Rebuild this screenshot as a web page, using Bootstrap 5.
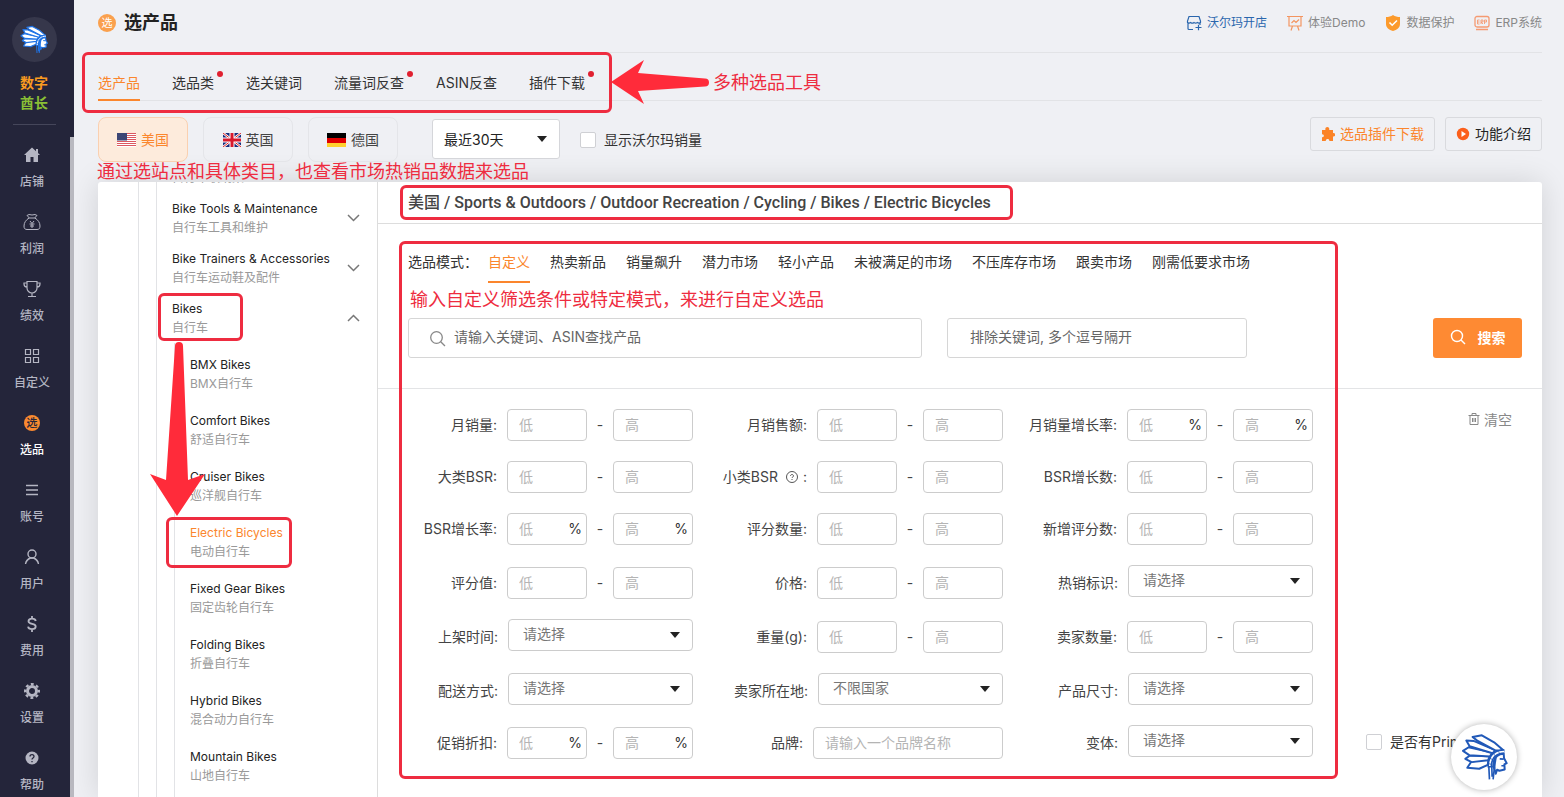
<!DOCTYPE html>
<html lang="zh-CN">
<head>
<meta charset="utf-8">
<meta name="viewport" content="width=device-width, initial-scale=1">
<title>选产品 - 数字酋长</title>
<link rel="stylesheet" href="https://cdn.jsdelivr.net/npm/bootstrap@5.3.0/dist/css/bootstrap.min.css">
<style>
:root{--brand:#fb862d;--note:#ee2c40;--line:#e2e3e6}
body{font:14px/20px Inter,"Noto Sans CJK SC",sans-serif;background:#eff0f4;color:#333;height:100vh;overflow:hidden}
a{text-decoration:none;color:inherit}
.fs-s{font-size:12px}
.text-brand{color:var(--brand)!important}

/* sidebar */
.side{width:74px;background:#24253a;color:#b5b6c3;overflow:hidden}
.side-top{height:137px;padding:17px 6px 0 0}
.side-logo{width:45px;height:45px;background:#36374b;margin-bottom:11px}
.side-name{font-weight:700;line-height:20px}
.side-rule{width:43px;height:1px;background:#45465a;margin-top:11px}
.side-nav{border-right:4px solid #b9b9c0;padding-right:6px}
.side-nav a{height:67px;padding-top:9px;font-weight:500;font-size:12px}
.side-nav svg{width:18px;height:18px;margin-bottom:8px}
.side-nav a.active{color:#fff}

/* page head */
.main{padding:0 22px 0 24px}
.page-head,.tool-tabs,.toolbar{flex:none}
.page-head{height:53px;border-bottom:1px solid var(--line);padding-bottom:6px}
.page-head h1{font-size:18px;line-height:24px;font-weight:700;color:#222}
.quick{gap:20px;color:#888}
.quick a{gap:5px}
.tool-tabs{height:48px;border-bottom:1px solid var(--line)}
.tool-list{gap:32px}
.tool-list a{height:48px;line-height:20px;padding-top:20px;display:block;position:relative}
.tool-list a.active,.mode-list a.active{color:var(--brand);border-bottom:2px solid var(--brand)}
.dot::after{content:"";position:absolute;right:-9px;top:18px;width:6px;height:6px;border-radius:50%;background:#e02030}
.toolbar{height:81px;padding-top:16px}
.country{width:90px;height:45px;border:1px solid #e4e5e9;border-radius:8px;gap:5px;background:none;color:#444}
.country.active{background:#fdebdc;border-color:#fad0b0;color:var(--brand)}
.period{width:128px;height:40px;margin:2px 20px 0 34px;padding:0 11px;border-color:#d5d6da;color:#222;font-size:14px;border-radius:3px}
.tick{width:16px;height:16px;margin:0;border-color:#cfd0d4;border-radius:2px!important}
.tool-btn{height:34px;border:1px solid #d9dade;border-radius:3px;padding:0 10px;background:none;color:#222;gap:5px}
.caret{appearance:none;background:#fff url("data:image/svg+xml,%3Csvg xmlns='http://www.w3.org/2000/svg' viewBox='0 0 10 6'%3E%3Cpath fill='%23222' d='M0 0h10L5 6z'/%3E%3C/svg%3E") no-repeat right 12px center/10px 6px}

/* category tree */
.board{flex:1 1 0;min-height:0;background:#fff;border-radius:3px 3px 0 0;box-shadow:0 0 30px rgba(0,0,0,.13)}
.tree{width:280px;flex:none;border-right:1px solid #ddd;overflow:hidden;font-size:12px}
.tree ul{list-style:none;margin:0;padding:0;border-left:1px solid var(--line)}
.tree .lv1{margin-left:40px}
.tree .lv2{margin:-20px 0 0 17px;padding-left:15px}
.tree .lv3{margin-left:2px;padding:3px 0 20px 15px}
.tree a{display:block;padding:6px 0;line-height:19px;color:#222}
.tree .lv3 a{padding:9px 0}
.tree .zh{display:block;color:#999}
.tree .chev{position:absolute;right:17px;top:20px}

/* right panel */
.crumbs{height:42px;border-bottom:1px solid #ddd;padding:0 0 0 30px;font-family:Roboto,"Noto Sans CJK SC",sans-serif;font-size:16px;font-weight:500;color:#444;white-space:nowrap}
.modes{height:59px;padding:28px 0 0 30px}
.mode-list{gap:20px;margin-left:10px}
.mode-list a{display:block;height:31px}
.search-row{padding:35px 20px 30px 30px;gap:25px;border-bottom:1px solid #e3e4e6}
.search-row .form-control,.search-row .btn{height:40px;border-radius:3px;font-size:14px}
.search-row .form-control{border-color:#d6d6d6;padding:0 12px 4px 45px}
.search-row .form-control::placeholder{color:#666}
.search-main{flex:0 1 514px}
.search-row .search-not{flex:0 1 300px;padding-left:22px}
.search-main svg{position:absolute;left:21px;top:12px}
.btn-search{width:89px;background:#fe8a33;color:#fff;font-weight:700;gap:12px;padding:0 0 2px}
.btn-search:hover{background:#f47d23;color:#fff}
.filters{padding:20px 0 38px 30px;display:grid;row-gap:20px}
.filter-row{display:grid;grid-template-columns:310fr 310fr 310fr 204fr}
.mixed{min-height:34px}
.field{display:flex;align-items:center;justify-content:flex-end;gap:10px;padding-right:25px;align-self:end;height:32px;color:#444;white-space:nowrap}
.field-pick{align-self:start}
.field-pick>label{padding-top:4px}
.range{display:flex;width:186px;justify-content:space-between;align-items:center}
.num{width:80px;position:relative}
.field .form-control,.field .form-select{height:32px;font-size:14px;border-color:#ccc;border-radius:4px;padding:0 11px 2px}
.field .form-control::placeholder{color:#b4b4b4}
.field .form-select{width:185px;padding:0 14px 4px;color:#777}
.field .brand-name{width:190px}
.num .unit{position:absolute;right:5px;top:6px;color:#333}
.help-mark{margin:0 5px 0 8px}

/* callouts laid over the page */
.note-box{position:absolute;border:3px solid var(--note);border-radius:6px;pointer-events:none;z-index:2}
.note-text{position:absolute;color:var(--note);font-size:18px;line-height:24px;white-space:nowrap;z-index:2}
.note-arrow{position:absolute;fill:#ff2b3a;z-index:3;pointer-events:none}
.note-tabs{inset:-1px -27px -12px -16px}
.arrow-left{left:513px;top:7px}
.text-tools{left:615px;top:18px}
.text-site{left:-1px;top:59px}
.note-crumb{inset:-8px -22px -7px -8px}
.note-form{top:17px;left:21px;right:204px;bottom:18px}
.text-mode{left:32px;top:64px}
.note-bikes{left:-14px;top:0;width:85px;height:48px}
.arrow-down{left:-23px;top:49px}
.note-ebike{left:-24px;top:3px;width:126px;height:51px}
.helper{position:fixed;right:47px;bottom:7px;width:66px;height:66px;background:#fff;border:0;box-shadow:0 0 6px rgba(0,0,0,.3);z-index:5}
</style>
</head>
<body class="d-flex">

<svg width="0" height="0" class="position-absolute" aria-hidden="true">
  <symbol id="chief" viewBox="360 130 140 145">
    <g fill="#fff" stroke="var(--ink)" stroke-width="6" stroke-linejoin="round">
      <path d="M378 235l12-18 52-11-2 20-26 12z"/>
      <path d="M372 208l14-10 60 2-5 12-50 6z"/>
      <path d="M365 184l17-11 72 16-8 12-62-4z"/>
      <path d="M375 153l22 1 67 28-10 9-69-21z"/>
      <path d="M394 142l28-5 37 21 28 24-23 1-56-30z"/>
      <path d="M460 238l-2-22c3-12 14-22 30-23l1 13 8 15-7 4 1 15-16 4-7-3-4 12z"/>
    </g>
    <g fill="none">
      <path stroke="var(--ink)" stroke-width="14" d="M490 186c-30 0-44 20-44 48"/>
      <path stroke="#fff" stroke-width="5" stroke-dasharray="14 2" d="M489 186c-29 0-43 20-43 44"/>
      <path stroke="var(--ink)" stroke-width="5" d="M443 230l2 40M452 230l1 32M460 234l-4 36M476 208l12 1M481 229h9"/>
    </g>
    <path fill="var(--ink)" d="M453 232c0-14 5-22 14-28l-3 20-3 20z"/>
  </symbol>
</svg>

<aside class="side flex-shrink-0 d-flex flex-column">
  <div class="side-top flex-shrink-0 d-flex flex-column align-items-center">
    <a href="#" class="side-logo rounded-circle d-flex align-items-center justify-content-center" aria-label="数字酋长">
      <svg width="28" height="29" style="--ink:#1f74e8"><use href="#chief"/></svg>
    </a>
    <div class="side-name" style="color:#fa9b20">数字</div>
    <div class="side-name" style="color:#8abf35">酋长</div>
    <div class="side-rule"></div>
  </div>
  <nav class="side-nav flex-fill d-flex flex-column text-center">
    <a href="#"><svg class="d-block mx-auto" viewBox="0 0 18 18" fill="currentColor"><path d="M9 1.500 1 9h2v7h4.500v-5h3v5H15V9h2l-2-2V3h-2v2.200z"/></svg>店铺</a>
    <a href="#"><svg class="d-block mx-auto" viewBox="0 0 18 18" fill="none" stroke="currentColor"><path d="M6 4.500 4 2.500l2-1 3 .500 3-.500 2 1-2 2M5 5h8M6 5C3 7 1 9.500 1 13c0 2.500 1 3.500 3 3.500h10c2 0 3-1 3-3.500 0-3.500-2-6-5-8M7 8l2 2.500L11 8M6.500 11h5M7 13h4M9 11v4"/></svg>利润</a>
    <a href="#"><svg class="d-block mx-auto" viewBox="0 0 18 18" fill="none" stroke="currentColor" stroke-width="1.200"><path d="M4 1.500h10V8a5 5 0 0 1-10 0zM4 3H1v1c0 2 1 3 3 3M14 3h3v1c0 2-1 3-3 3M9 13v3.500M5 16.500h8"/></svg>绩效</a>
    <a href="#"><svg class="d-block mx-auto" viewBox="0 0 18 18" fill="none" stroke="currentColor" stroke-width="1.200"><path d="M2.500 2.500h5v5h-5zM10.500 2.500h5v5h-5zM2.500 10.500h5v5h-5zM10.500 10.500h5v5h-5z"/></svg>自定义</a>
    <a href="#" class="active"><svg class="d-block mx-auto" viewBox="0 0 18 18"><circle cx="9" cy="9" r="8" fill="#fb8a30"/><text x="9" y="13" font-size="11" font-weight="500" text-anchor="middle" fill="#24253a">选</text></svg>选品</a>
    <a href="#"><svg class="d-block mx-auto" viewBox="0 0 18 18" stroke="currentColor" stroke-width="1.500"><path d="M3 4.500h12M3 9h12M3 13.500h12"/></svg>账号</a>
    <a href="#"><svg class="d-block mx-auto" viewBox="0 0 18 18" fill="none" stroke="currentColor" stroke-width="1.400"><circle cx="9" cy="6" r="4"/><path d="M2.500 16c.500-3 2.500-5 5-6h3c2.500 1 4.500 3 5 6"/></svg>用户</a>
    <a href="#"><svg class="d-block mx-auto" viewBox="0 0 18 18" fill="none" stroke="currentColor" stroke-width="1.800"><path d="M12.800 6C12.500 4.500 11 3.700 9 3.700S5.500 4.700 5.500 6.300c0 3.500 7.200 1.800 7.200 5.200 0 1.800-1.700 2.700-3.700 2.700s-3.700-.900-3.900-2.500M9 1v3M9 14v3"/></svg>费用</a>
    <a href="#"><svg class="d-block mx-auto" viewBox="0 0 18 18"><circle cx="9" cy="9" r="4.500" fill="none" stroke="currentColor" stroke-width="3"/><circle cx="9" cy="9" r="6.900" fill="none" stroke="currentColor" stroke-width="2.200" stroke-dasharray="2.900 2.520" stroke-dashoffset="1.400"/></svg>设置</a>
    <a href="#"><svg class="d-block mx-auto" viewBox="0 0 18 18"><circle cx="9" cy="9" r="6.500" fill="currentColor"/><path d="M7 7.500c0-2.500 4-2.500 4 0 0 1.500-2 1.500-2 3M9 12v1.300" fill="none" stroke="#24253a" stroke-width="1.300"/></svg>帮助</a>
  </nav>
</aside>

<main class="main flex-fill d-flex flex-column">
  <header class="page-head d-flex align-items-center justify-content-between">
    <div class="d-flex align-items-center gap-2">
      <svg width="18" height="18" viewBox="0 0 18 18"><circle cx="9" cy="9" r="9" fill="#faa04d"/><text x="9" y="13" font-size="11" text-anchor="middle" fill="#fff">选</text></svg>
      <h1 class="m-0">选产品</h1>
    </div>
    <nav class="quick d-flex fs-s">
      <a href="#" class="d-flex align-items-center" style="color:#2a66ad"><svg width="16" height="16" viewBox="0 0 16 16" fill="none" stroke="currentColor" stroke-width="1.200"><path d="M3 1.500h10l1.500 4.500v1.500c-1 .8-2.200.8-3.200 0-1 .8-2.300.8-3.300 0-1 .8-2.400.8-3.300 0-1 .8-2.200.8-3.200 0V6zM2 8v5.500c0 .6.400 1 1 1h4M14 8v2M9.500 12.500h6M12.500 9.800v5.500"/></svg>沃尔玛开店</a>
      <a href="#" class="d-flex align-items-center"><svg width="16" height="16" viewBox="0 0 16 16" fill="none" stroke="#f39560" stroke-width="1.200"><path d="M0 1.500h16M2 1.500v9.500h12V1.500M4.500 8 7 5.500l2 2 3-3M5.500 11 4 15.500M10.500 11l1.500 4.500"/></svg>体验Demo</a>
      <a href="#" class="d-flex align-items-center"><svg width="16" height="16" viewBox="0 0 16 16"><path fill="#fc9a2b" d="M8 0c2 1.500 4.500 2 7 2v7c0 3.500-3 6-7 7-4-1-7-3.500-7-7V2c2.500 0 5-.500 7-2z"/><path d="m4.500 7.500 2.700 2.700L12 5.500" fill="none" stroke="#fff" stroke-width="1.600"/></svg>数据保护</a>
      <a href="#" class="d-flex align-items-center"><svg width="16" height="16" viewBox="0 0 16 16" fill="none" stroke="#f59a72" stroke-width="1.300"><rect x="1" y="1.500" width="14" height="10.500" rx="2"/><path d="M2 14.500h12" stroke-width="1.500"/><path stroke-width=".9" d="M5.500 5H3.500v4h2M3.500 7h2M7 9V5h2v2H7l2 2M10.500 9V5h2v2h-2"/></svg>ERP系统</a>
    </nav>
  </header>

  <div class="tool-tabs">
    <div class="position-relative d-inline-flex align-top">
      <nav class="tool-list d-flex">
        <a href="#" class="active">选产品</a>
        <a href="#" class="dot">选品类</a>
        <a href="#">选关键词</a>
        <a href="#" class="dot">流量词反查</a>
        <a href="#">ASIN反查</a>
        <a href="#" class="dot">插件下载</a>
      </nav>
      <span class="note-box note-tabs"></span>
      <svg class="note-arrow arrow-left" width="98" height="45" viewBox="0 0 98 45"><path d="M0 22 33 0l-6 13 67 5.500a4 4 0 0 1 0 8L27 31l6 13z"/></svg>
      <span class="note-text text-tools">多种选品工具</span>
    </div>
  </div>

  <div class="toolbar d-flex align-items-start position-relative">
    <div class="d-flex" style="gap:15px">
      <button type="button" class="country active d-flex align-items-center justify-content-center"><svg width="19" height="14" viewBox="0 0 19 14"><path fill="#fff" d="M0 0h19v14H0z"/><path stroke="#dc5860" d="M0 .5h19M0 2.500h19M0 4.500h19M0 6.500h19M0 8.500h19M0 10.500h19M0 12.500h19"/><path fill="#3c4675" d="M0 0h10v7.500H0z"/></svg>美国</button>
      <button type="button" class="country d-flex align-items-center justify-content-center"><svg width="18" height="14" viewBox="0 0 18 14"><path fill="#172b7c" d="M0 0h18v14H0z"/><path stroke="#fff" stroke-width="2.500" d="m0 0 18 14M18 0 0 14"/><path stroke="#d22" d="m0 0 18 14M18 0 0 14"/><path stroke="#fff" stroke-width="5" d="M9 0v14M0 7h18"/><path stroke="#d8182c" stroke-width="3" d="M9 0v14M0 7h18"/></svg>英国</button>
      <button type="button" class="country d-flex align-items-center justify-content-center"><svg width="19" height="14" viewBox="0 0 19 14"><path d="M0 0h19v5H0z"/><path fill="#e00000" d="M0 5h19v5H0z"/><path fill="#ffd12e" d="M0 10h19v4H0z"/></svg>德国</button>
    </div>
    <select class="form-select caret period" aria-label="时间范围"><option>最近30天</option></select>
    <div class="d-flex align-items-center gap-2" style="height:45px">
      <input class="form-check-input tick" type="checkbox" id="walmart"><label for="walmart">显示沃尔玛销量</label>
    </div>
    <div class="ms-auto d-flex" style="gap:10px">
      <button type="button" class="tool-btn text-brand d-flex align-items-center"><svg width="14" height="14" viewBox="0 0 14 14" fill="#fb8327"><path d="M4.500 3C3.800 1.300 5 0 6.300 0s2.500 1.300 1.800 3H12v3c3-.5 3 4 0 3.500V14H8.300c.5-2.800-3.800-2.800-3.500 0H1v-3.800c2.500.5 2.500-3.200 0-3V3z"/></svg>选品插件下载</button>
      <button type="button" class="tool-btn d-flex align-items-center"><svg width="14" height="14" viewBox="0 0 14 14"><circle cx="7" cy="7" r="6.200" fill="#fb5f1b"/><path fill="#fff" d="m5.500 4 4.500 3-4.500 3z"/></svg>功能介绍</button>
    </div>
    <span class="note-text text-site">通过选站点和具体类目，也查看市场热销品数据来选品</span>
  </div>

  <div class="board d-flex">
    <nav class="tree" aria-label="类目">
      <ul class="lv1"><li>
        <ul class="lv2">
          <li><a href="#"><span class="zh">自行车收纳架</span></a></li>
          <li class="position-relative"><a href="#">Bike Tools &amp; Maintenance<span class="zh">自行车工具和维护</span></a><svg class="chev" width="13" height="10" fill="none" stroke="#777" stroke-width="1.500"><path d="m1 2 5.500 5.500L12 2"/></svg></li>
          <li class="position-relative"><a href="#">Bike Trainers &amp; Accessories<span class="zh">自行车运动鞋及配件</span></a><svg class="chev" width="13" height="10" fill="none" stroke="#777" stroke-width="1.500"><path d="m1 2 5.500 5.500L12 2"/></svg></li>
          <li class="position-relative"><a href="#">Bikes<span class="zh">自行车</span></a><svg class="chev" width="13" height="10" fill="none" stroke="#777" stroke-width="1.500"><path d="M1 8 6.500 2.500 12 8"/></svg>
            <span class="note-box note-bikes"></span>
            <svg class="note-arrow arrow-down" width="56" height="175" viewBox="0 0 56 175"><path d="M28 174 1 132l16 6 9-134a4 4 0 0 1 8 0l5 134 17-6z"/></svg>
            <ul class="lv3">
              <li><a href="#">BMX Bikes<span class="zh">BMX自行车</span></a></li>
              <li><a href="#">Comfort Bikes<span class="zh">舒适自行车</span></a></li>
              <li><a href="#">Cruiser Bikes<span class="zh">巡洋舰自行车</span></a></li>
              <li class="position-relative"><a href="#" class="text-brand">Electric Bicycles<span class="zh">电动自行车</span></a><span class="note-box note-ebike"></span></li>
              <li><a href="#">Fixed Gear Bikes<span class="zh">固定齿轮自行车</span></a></li>
              <li><a href="#">Folding Bikes<span class="zh">折叠自行车</span></a></li>
              <li><a href="#">Hybrid Bikes<span class="zh">混合动力自行车</span></a></li>
              <li><a href="#">Mountain Bikes<span class="zh">山地自行车</span></a></li>
            </ul>
          </li>
        </ul>
      </li></ul>
    </nav>

    <section class="flex-fill" style="min-width:0">
      <div class="crumbs d-flex align-items-center"><div class="position-relative">美国 / Sports &amp; Outdoors / Outdoor Recreation / Cycling / Bikes / Electric Bicycles<span class="note-box note-crumb"></span></div></div>

      <form class="position-relative">
        <span class="note-box note-form"></span>
        <div class="modes d-flex"><span>选品模式：</span>
          <nav class="mode-list d-flex">
            <a href="#" class="active">自定义</a><a href="#">热卖新品</a><a href="#">销量飙升</a><a href="#">潜力市场</a><a href="#">轻小产品</a><a href="#">未被满足的市场</a><a href="#">不压库存市场</a><a href="#">跟卖市场</a><a href="#">刚需低要求市场</a>
          </nav>
        </div>
        <span class="note-text text-mode">输入自定义筛选条件或特定模式，来进行自定义选品</span>
        <div class="search-row d-flex">
          <div class="search-main position-relative">
            <svg width="17" height="17" fill="none" stroke="#888" stroke-width="1.300"><circle cx="7.500" cy="7.500" r="5.800"/><path d="m11.700 11.700 4.300 4.300"/></svg>
            <input class="form-control" placeholder="请输入关键词、ASIN查找产品" aria-label="关键词">
          </div>
          <input class="form-control search-not" placeholder="排除关键词, 多个逗号隔开" aria-label="排除关键词">
          <button type="button" class="btn btn-search ms-auto d-flex align-items-center justify-content-center"><svg width="16" height="16" fill="none" stroke="#fff" stroke-width="1.400"><circle cx="7" cy="7" r="5.500"/><path d="m11 11 4 4"/></svg>搜索</button>
        </div>

        <div class="filters">
          <div class="filter-row">
            <div class="field"><label for="a1">月销量:</label><div class="range"><div class="num"><input id="a1" class="form-control" placeholder="低"></div>-<div class="num"><input class="form-control" placeholder="高" aria-label="月销量上限"></div></div></div>
            <div class="field"><label for="a2">月销售额:</label><div class="range"><div class="num"><input id="a2" class="form-control" placeholder="低"></div>-<div class="num"><input class="form-control" placeholder="高" aria-label="月销售额上限"></div></div></div>
            <div class="field"><label for="a3">月销量增长率:</label><div class="range"><div class="num"><input id="a3" class="form-control" placeholder="低"><span class="unit">%</span></div>-<div class="num"><input class="form-control" placeholder="高" aria-label="月销量增长率上限"><span class="unit">%</span></div></div></div>
            <div class="text-end" style="padding-right:30px"><button type="button" class="btn p-0 border-0" style="font-size:14px;line-height:20px;color:#888"><svg width="12" height="12" viewBox="0 0 12 12" fill="none" stroke="currentColor" class="me-1 align-baseline"><path d="M.5 2.500h11M4 2.500v-2h4v2M2 3v8.500h8V3M4.500 5v4M6 5v4M7.500 5v4"/></svg>清空</button></div>
          </div>
          <div class="filter-row">
            <div class="field"><label for="b1">大类BSR:</label><div class="range"><div class="num"><input id="b1" class="form-control" placeholder="低"></div>-<div class="num"><input class="form-control" placeholder="高" aria-label="大类BSR上限"></div></div></div>
            <div class="field"><label for="b2" class="d-flex align-items-center">小类BSR<svg class="help-mark" width="12" height="12" viewBox="0 0 12 12" fill="none" stroke="#555"><circle cx="6" cy="6" r="5.500"/><path d="M4.500 5c0-2 3-2 3 0 0 1-1.500 1-1.500 2M6 8v1"/></svg>:</label><div class="range"><div class="num"><input id="b2" class="form-control" placeholder="低"></div>-<div class="num"><input class="form-control" placeholder="高" aria-label="小类BSR上限"></div></div></div>
            <div class="field"><label for="b3">BSR增长数:</label><div class="range"><div class="num"><input id="b3" class="form-control" placeholder="低"></div>-<div class="num"><input class="form-control" placeholder="高" aria-label="BSR增长数上限"></div></div></div>
          </div>
          <div class="filter-row">
            <div class="field"><label for="c1">BSR增长率:</label><div class="range"><div class="num"><input id="c1" class="form-control" placeholder="低"><span class="unit">%</span></div>-<div class="num"><input class="form-control" placeholder="高" aria-label="BSR增长率上限"><span class="unit">%</span></div></div></div>
            <div class="field"><label for="c2">评分数量:</label><div class="range"><div class="num"><input id="c2" class="form-control" placeholder="低"></div>-<div class="num"><input class="form-control" placeholder="高" aria-label="评分数量上限"></div></div></div>
            <div class="field"><label for="c3">新增评分数:</label><div class="range"><div class="num"><input id="c3" class="form-control" placeholder="低"></div>-<div class="num"><input class="form-control" placeholder="高" aria-label="新增评分数上限"></div></div></div>
          </div>
          <div class="filter-row mixed">
            <div class="field"><label for="d1">评分值:</label><div class="range"><div class="num"><input id="d1" class="form-control" placeholder="低"></div>-<div class="num"><input class="form-control" placeholder="高" aria-label="评分值上限"></div></div></div>
            <div class="field"><label for="d2">价格:</label><div class="range"><div class="num"><input id="d2" class="form-control" placeholder="低"></div>-<div class="num"><input class="form-control" placeholder="高" aria-label="价格上限"></div></div></div>
            <div class="field field-pick"><label for="d3">热销标识:</label><select id="d3" class="form-select caret"><option>请选择</option></select></div>
          </div>
          <div class="filter-row mixed">
            <div class="field field-pick"><label for="e1">上架时间:</label><select id="e1" class="form-select caret"><option>请选择</option></select></div>
            <div class="field"><label for="e2">重量(g):</label><div class="range"><div class="num"><input id="e2" class="form-control" placeholder="低"></div>-<div class="num"><input class="form-control" placeholder="高" aria-label="重量上限"></div></div></div>
            <div class="field"><label for="e3">卖家数量:</label><div class="range"><div class="num"><input id="e3" class="form-control" placeholder="低"></div>-<div class="num"><input class="form-control" placeholder="高" aria-label="卖家数量上限"></div></div></div>
          </div>
          <div class="filter-row">
            <div class="field field-pick"><label for="f1">配送方式:</label><select id="f1" class="form-select caret"><option>请选择</option></select></div>
            <div class="field field-pick"><label for="f2">卖家所在地:</label><select id="f2" class="form-select caret"><option>不限国家</option></select></div>
            <div class="field field-pick"><label for="f3">产品尺寸:</label><select id="f3" class="form-select caret"><option>请选择</option></select></div>
          </div>
          <div class="filter-row mixed">
            <div class="field"><label for="g1">促销折扣:</label><div class="range"><div class="num"><input id="g1" class="form-control" placeholder="低"><span class="unit">%</span></div>-<div class="num"><input class="form-control" placeholder="高" aria-label="促销折扣上限"><span class="unit">%</span></div></div></div>
            <div class="field"><label for="g2">品牌:</label><input id="g2" class="form-control brand-name" placeholder="请输入一个品牌名称"></div>
            <div class="field field-pick"><label for="g3">变体:</label><select id="g3" class="form-select caret"><option>请选择</option></select></div>
            <div class="d-flex align-items-center gap-2" style="padding-left:28px"><input class="form-check-input tick" type="checkbox" id="prime"><label for="prime">是否有Prime</label></div>
          </div>
        </div>
      </form>
    </section>
  </div>
</main>

<button type="button" class="helper rounded-circle p-0" aria-label="联系客服"><svg width="47" height="48" style="--ink:#2159b8"><use href="#chief"/></svg></button>

<script src="https://cdn.jsdelivr.net/npm/bootstrap@5.3.0/dist/js/bootstrap.bundle.min.js"></script>
</body>
</html>
